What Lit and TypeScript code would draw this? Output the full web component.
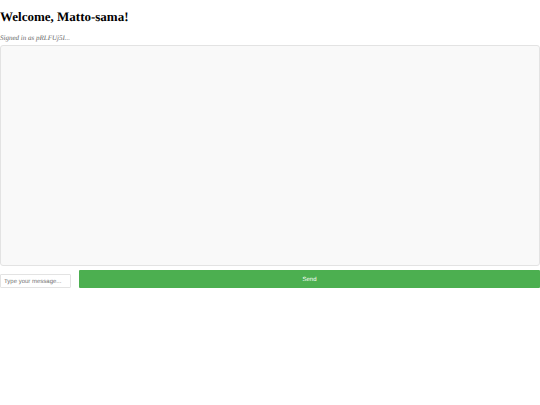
import { LitElement, html, css } from "lit";
import { customElement, state } from "lit/decorators.js";

@customElement("app-root")
export class AppRoot extends LitElement {
    static styles = css`
    :host {
        display: block;
        font-family: "Liberation Serif", "Times New Roman", serif;
        text-rendering: geometricPrecision;
    }
    h1 {
        margin: 0;
        padding: 9px 0;
        font-size: 13px;
        line-height: 16px;
        color: black;
    }
    .user {
        margin: 0;
        padding-bottom: 3px;
        font-size: 7px;
        line-height: 8px;
        font-style: italic;
        color: #666;
    }
    .messages {
        height: 221px;
        border: 1px solid #e3e3e3;
        border-radius: 3px;
        background-color: #f9f9f9;
        box-sizing: border-box;
        overflow-y: auto;
    }
    form {
        display: flex;
        align-items: flex-end;
        gap: 8px;
        margin-top: 4px;
    }
    input,
    button {
        margin: 0;
        box-sizing: border-box;
        font-family: "Liberation Sans", Arial, sans-serif;
        font-size: 6px;
        text-rendering: geometricPrecision;
    }
    input {
        flex: none;
        width: 71px;
        height: 14px;
        padding: 2px 3px 0;
        border: 1px solid #e3e3e3;
        border-radius: 1px;
    }
    input::placeholder {
        color: #757575;
    }
    button {
        flex: 1;
        height: 18px;
        padding: 2px 3px 0;
        border: none;
        border-radius: 1px;
        background-color: #4caf50;
        color: white;
        cursor: pointer;
    }
    `;

    @state() name = "Matto-sama";
    @state() userId = "pRLFUj5I";
    @state() messages: string[] = [];

    send(e: Event) {
        e.preventDefault();
        const input = this.renderRoot.querySelector("input")!;
        if (!input.value.trim()) return;
        this.messages = [...this.messages, input.value];
        input.value = "";
    }

    render() {
        return html`
        <h1>Welcome, ${this.name}!</h1>
        <p class="user">Signed in as ${this.userId}...</p>
        <div class="messages">
            ${this.messages.map((m) => html`<div>${m}</div>`)}
        </div>
        <form @submit=${this.send}>
            <input type="text" aria-label="Message" placeholder="Type your message..." />
            <button type="submit">Send</button>
        </form>
        `;
    }
}
